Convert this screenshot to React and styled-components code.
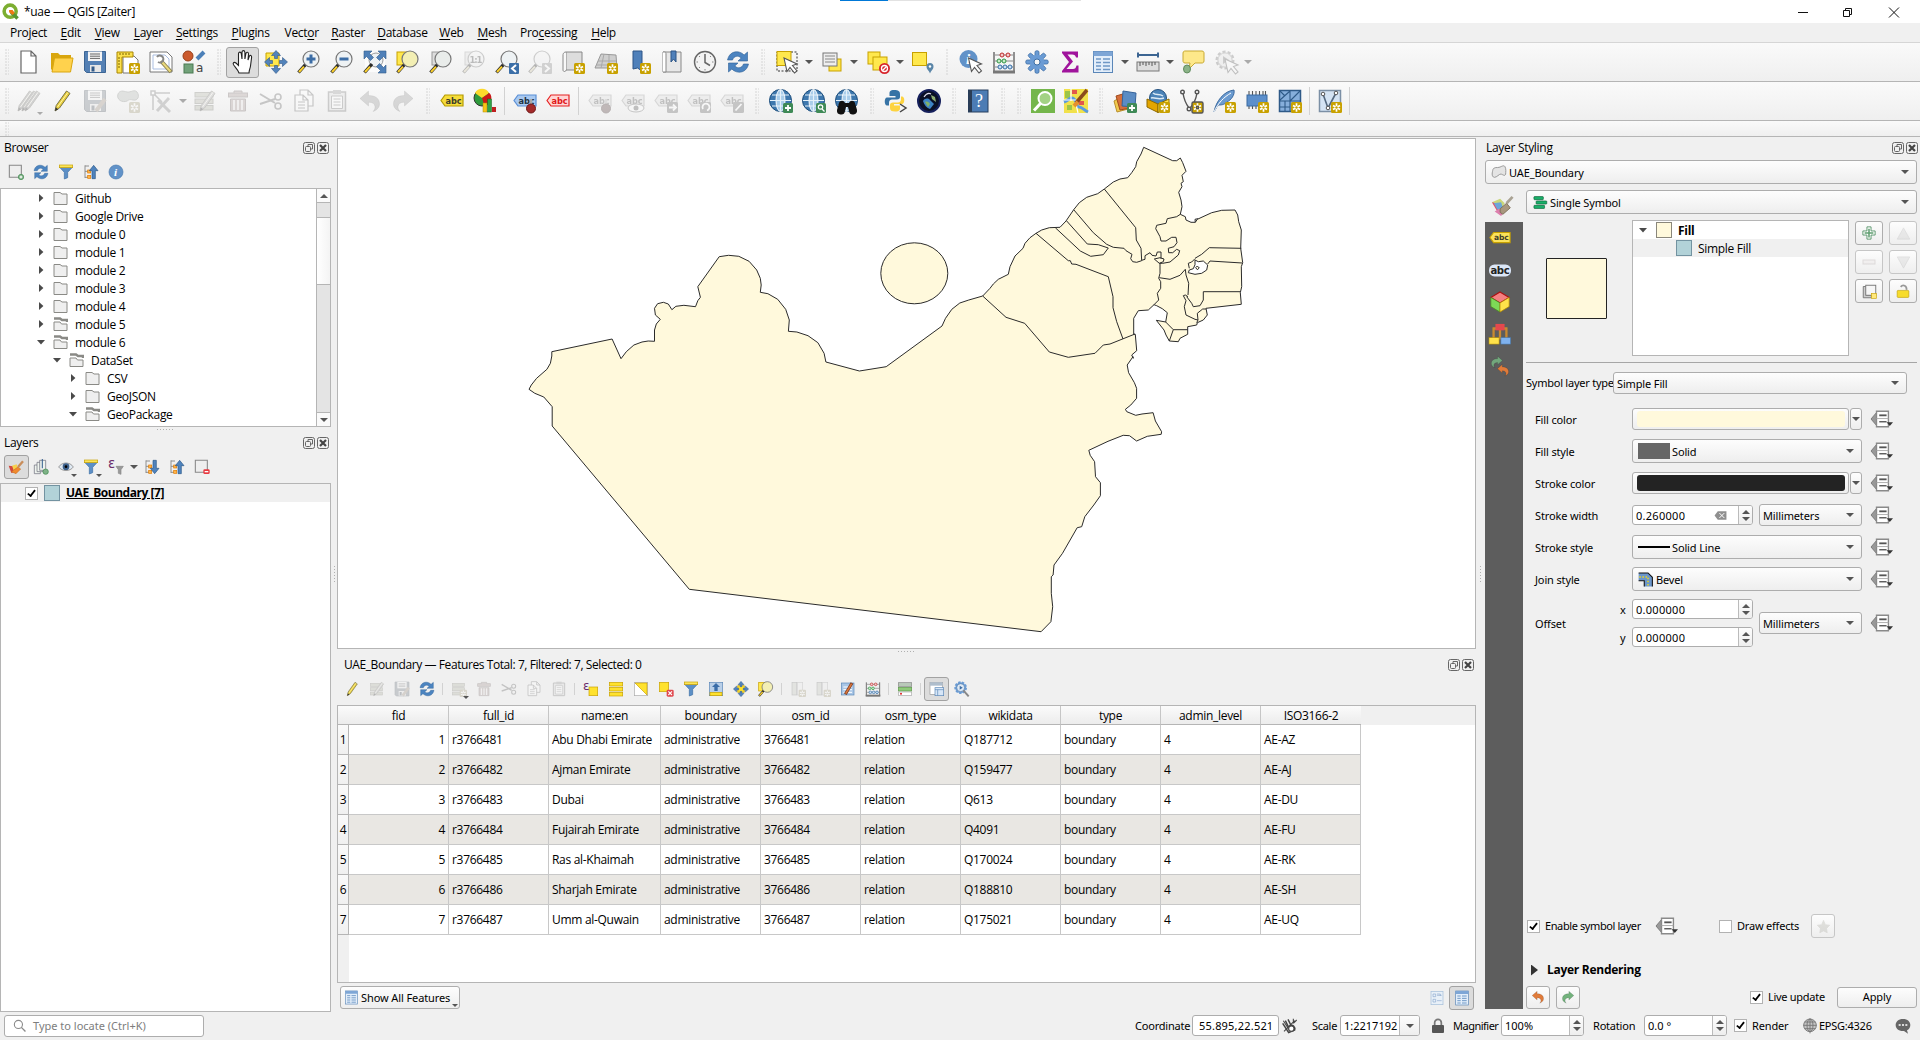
import React from "react";
import styled, { createGlobalStyle, css } from "styled-components";

const UI = '"Open Sans", "Noto Sans", sans-serif';
const FORM = '"Noto Sans", "Open Sans", sans-serif';
const LINE = "#b5b5b5";

const Global = createGlobalStyle`
  *, *::before, *::after { box-sizing: border-box; }
  html, body { margin: 0; padding: 0; background: #f0f0f0; }
  body { overflow: hidden; }
`;

/* ------------------------------------------------------------ icons */

const Star = ({ c = "#c8a100" }) => (
  <g>
    <rect x="13" y="13" width="11" height="11" rx="1.5" fill={c} />
    <path d="M18.5 14.3v8.400M15 16.400l7 4.200M22 16.400l-7 4.200" stroke="#fff" strokeWidth="1.7" />
    <circle cx="18.5" cy="18.5" r="1.2" fill={c} />
  </g>
);
const Plus = () => (
  <g>
    <rect x="14" y="14" width="10" height="10" rx="1.5" fill="#3f8a57" />
    <path d="M19 16v6M16 19h6" stroke="#fff" strokeWidth="1.8" />
  </g>
);
const GrayBadge = ({ d }) => (
  <g>
    <rect x="13" y="13" width="11" height="11" rx="1.5" fill="#666" />
    <path d={d} stroke="#fff" strokeWidth="1.8" fill="none" />
  </g>
);
const Lens = ({ fill = "#eef2f4" }) => (
  <g>
    <path d="M9 14L1.5 22.5" stroke="#2a2a2a" strokeWidth="3.4" />
    <path d="M7 16.6L2 22" stroke="#fbd02d" strokeWidth="2" />
    <circle cx="14" cy="9" r="8" fill={fill} stroke="#777" strokeWidth="1.2" />
  </g>
);
const Tag = ({ fill, stroke, color = "#3d3d2a" }) => (
  <g>
    <path d="M1 11.500L5 6h18v11H5z" fill={fill} stroke={stroke} strokeWidth="1.2" />
    <text x="5.5" y="14.6" fontFamily="DejaVu Sans" fontWeight="bold" fontSize="8.2" fill={color} textLength="16">abc</text>
  </g>
);
const Globe = () => (
  <g>
    <circle cx="11.5" cy="11.5" r="11" fill="#3e78ae" stroke="#1d4e7c" />
    <ellipse cx="11.5" cy="11.5" rx="4.5" ry="11" fill="#a9cdea" stroke="#fff" strokeWidth="1" />
    <path d="M1 11.5h21M3 6h17M3 17h17M11.5 1v21" stroke="#e5f1fa" strokeWidth="1.1" />
  </g>
);
const Pencil = ({ x = 0, c = "#e8cd3a" }) => (
  <g transform={`translate(${x} 0)`}>
    <path d="M5 22l1.2-5.5L16.5 2l3.5 2.4L9.5 19z" fill={c} stroke="#77734b" />
    <path d="M7.500 18L18 3.300" stroke="#fff6ae" strokeWidth="1" />
    <path d="M5 22l.8-3.4 2.4 1.6z" fill="#333" />
  </g>
);
const Rows = () => (
  <g fill="#b7bb72" stroke="#80845a">
    <rect x="2" y="3.5" width="18" height="4.5" />
    <rect x="2" y="10" width="18" height="4.5" />
    <rect x="2" y="16.5" width="18" height="4.5" />
  </g>
);
const Sheet = ({ x = 4, y = 1, w = 15, h = 20 }) => (
  <path d={`M${x} ${y}h${w - 5}l5 5v${h - 5}H${x}z M${x + w - 5} ${y}v5h5`} fill="#fff" stroke="#666" strokeWidth="1.2" />
);
const Refresh = () => (
  <g fill="#4c84c0" stroke="#2d5f95" strokeWidth=".6">
    <path d="M1.5 10C3 3 8.5 .8 13.5 2.2c2 .6 3.4 1.5 4.6 2.8L21.5 2v9h-9.5l3.2-3c-3-3-7.5-2-8.7 2z" />
    <path d="M22.5 14C21 21 15.5 23.2 10.5 21.8c-2-.6-3.4-1.5-4.6-2.8L2.5 22v-9H12l-3.2 3c3 3 7.5 2 8.7-2z" />
  </g>
);
const Tree = () => (
  <g>
    <path d="M3 2v19M3 3h6M3 11h6M3 20h6" stroke="#888" strokeWidth="1.4" fill="none" />
    <rect x="7" y="9" width="4.5" height="4.5" fill="#ffb347" stroke="#e07b00" />
    <rect x="7" y="17" width="4.5" height="4.5" fill="#ffb347" stroke="#e07b00" />
  </g>
);
const Disk = () => (
  <g>
    <path d="M1.5 1.5h21v21h-19l-2-2z" fill="#5480b4" stroke="#3c6594" />
    <rect x="5" y="1.5" width="14" height="9.5" fill="#f4f4f4" />
    <path d="M7 4h10M7 6.200h10M7 8.400h10" stroke="#666" />
    <rect x="7" y="15" width="11" height="7" fill="#e6e6e6" />
    <rect x="8.5" y="16.5" width="3" height="5" fill="#345b88" />
  </g>
);
const Form = () => (
  <g>
    <rect x="2.5" y="1.5" width="19" height="21" fill="#e3eefa" stroke="#5a86b8" />
    <rect x="2.5" y="1.5" width="19" height="4.500" fill="#7ea6d6" />
    <path d="M5 9h5M5 12.500h5M5 16h5M5 19.500h5M12 9h7M12 12.500h7M12 16h7M12 19.500h7" stroke="#6f98c6" strokeWidth="1.500" />
  </g>
);
const Cursor = ({ x = 0, y = 0 }) => (
  <path transform={`translate(${x} ${y})`} d="M9 8l3 13.500 3-4 4.500 5.500 2.500-2-4.500-5.500 4.500-1.500z" fill="#fff" stroke="#555" strokeWidth="1.1" />
);
const Abacus = () => (
  <g>
    <path d="M2 2v20M22 2v20" stroke="#666" strokeWidth="1.4" />
    <path d="M1 22h22" stroke="#777" strokeWidth="3" />
    <path d="M3 5h18M3 11h18M3 17h18" stroke="#888" />
    <g fill="#f6caca" stroke="#bd2a2a"><circle cx="10" cy="5" r="2" /><circle cx="16" cy="5" r="2" /></g>
    <g fill="#c6ecc6" stroke="#2e9444"><circle cx="7" cy="11" r="2" /><circle cx="12" cy="11" r="2" /></g>
    <g fill="#cadff4" stroke="#356ea6"><circle cx="8" cy="17" r="2" /><circle cx="13" cy="17" r="2" /><circle cx="18" cy="17" r="2" /></g>
  </g>
);
const Funnel = () => (
  <g>
    <path d="M2 4.500l7.500 8v10l5-2v-8L22 4.500z" fill="#5c8fc6" stroke="#3b6ea5" />
    <rect x="2" y="1.5" width="20" height="4" fill="#fbe45a" stroke="#c8a100" />
  </g>
);
const UpArrow = () => (
  <path d="M16 2l6.500 8h-4v12h-5V10h-4z" fill="#4f83bd" stroke="#2b5788" />
);
const FourWay = () => (
  <g fill="#5283bb" stroke="#31598a" strokeWidth=".6">
    <path d="M12 .5l4.500 5h-3v3h-3v-3h-3zM12 23.500l4.500-5h-3v-3h-3v3h-3zM.5 12l5-4.500v3h3v3h-3v3zM23.500 12l-5-4.500v3h-3v3h3v3z" />
  </g>
);
const Undo = ({ c = "#999", flip }) => (
  <path transform={flip ? "translate(24 0) scale(-1 1)" : undefined} d="M2 9.500L10.500 2v4.500c7 0 11 3 11 8.500 0 3.500-2.500 6-6.500 7.500 1.500-1.500 2.200-3 2-5-.3-2.800-2.500-4.300-6.500-4.300V17z" fill={c} stroke="#00000044" strokeWidth=".8" />
);
const Trash = () => (
  <g fill="#d98b82" stroke="#99625c">
    <rect x="2.5" y="4" width="19" height="4" />
    <path d="M8 4V2h8v2M4.500 10h15v12h-15z" />
    <path d="M8 11v10M12 11v10M16 11v10" stroke="#fff" strokeWidth="1.5" />
  </g>
);
const Copy = () => (<g><Sheet x={8} y={1} w={13} h={16} /><Sheet x={3} y={6} w={13} h={16} /><path d="M6 13h7M6 16h7M6 19h7" stroke="#666" /></g>);
const Paste = () => (<g><path d="M3.500 3h17v19h-17z" fill="#ddd" stroke="#777" strokeWidth="1.5" /><rect x="8" y="1" width="8" height="4" fill="#999" /><path d="M6.500 7h11v12.500h-11z" fill="#fff" stroke="#777" /><path d="M8.500 10h7M8.500 13h7M8.500 16h7" stroke="#777" /></g>);
const Scissors = () => (<g fill="none" stroke="#666" strokeWidth="1.6"><path d="M1 5l15 9M1 15l15-5" strokeWidth="2" /><circle cx="19" cy="8" r="3" /><circle cx="19" cy="17" r="3" /></g>);
const Bulb = () => (<g><path d="M18 10v7" stroke="#aaa" strokeWidth="2.5" /><circle cx="18" cy="19.5" r="4.500" fill="#a32a2a" stroke="#701818" /></g>);
const Blob = () => (<path d="M2 5c2-4 5-3 9-2 4 .6 7-3 10 0 3 4 1 9-4 8-4-1-4 0-6 1-4 2-11-1-9-7z" fill="#a7bda4" stroke="#7d8f7b" />);
const Palette = () => (
  <g>
    <path d="M1 8l9-4 5 5-5 9z" fill="#c9d67a" />
    <path d="M1 8l8 2-1 10z" fill="#e0506b" />
    <path d="M3 9l8-1 2 6-6 2z" fill="#6ba6d8" />
    <path d="M4 18l5-3 5 4-3 4z" fill="#dd7fae" />
    <path d="M10 15l7-6 4 5-8 7-3-2z" fill="#a8977e" stroke="#7b6c56" />
    <path d="M17 9L23.500 2" stroke="#a9a293" strokeWidth="3" />
  </g>
);
const Expand = () => (<g><path d="M2 2h20v20H2z" fill="#fff" fillOpacity=".7" /><circle cx="13" cy="10" r="7" fill="#eef2f4" stroke="#999" /><path d="M1 1h8L6.500 3.500l4 4-3 3-4-4L1 9zM23 1v8l-2.500-2.500-4 4-3-3 4-4L15 1zM23 23h-8l2.500-2.500-4-4 3-3 4 4L23 15z" fill="#4f80b8" stroke="#2f5b8c" strokeWidth=".6" /><path d="M9 14L1.500 22.500" stroke="#2a2a2a" strokeWidth="3.4" /><path d="M7 16.600L2 22" stroke="#fbd02d" strokeWidth="2" /></g>);
const Info = () => (<g><circle cx="12" cy="12" r="10.5" fill="#6192c8" stroke="#4577ad" /><text x="9" y="18" fontFamily="Liberation Serif" fontStyle="italic" fontWeight="bold" fontSize="17" fill="#fff">i</text></g>);
const gearTeeth = Array.from({ length: 8 }, (_, i) => i * 45);
const Gear = () => (<g>{gearTeeth.map((a) => <rect key={a} x="10" y="0.8" width="4" height="6" rx="1.5" fill="#6a9bd4" stroke="#3d6ea5" strokeWidth=".8" transform={`rotate(${a} 12 12)`} />)}<circle cx="12" cy="12" r="7.300" fill="#6a9bd4" /><circle cx="12" cy="12" r="3" fill="#f6f6f6" stroke="#3d6ea5" /></g>);

const ICONS = {
  newFile: <Sheet x={4} y={1} w={15} h={22} />,
  open: <g><path d="M1 3h7l2 2h11v4H5L3 21 1 19z" fill="#d9a60f" /><path d="M4.500 8H23l-2.500 14H2z" fill="#ffd24d" stroke="#d9a60f" /></g>,
  save: <Disk />,
  layout: <g><path d="M7 6h11l4 4v13H7z" fill="#fff" stroke="#777" /><path d="M1 2h16v5H6v16H1z" fill="#fbe04c" stroke="#a98600" /><path d="M4 3v2M7 3v2M10 3v2M13 3v2M2 8h2M2 11h2M2 14h2M2 17h2" stroke="#7d6500" /><Star /></g>,
  layoutManager: <g><path d="M1 2h17l5 5v15H1z" fill="#fff" stroke="#777" /><path d="M4 5h12l4 4v10H4z" fill="none" stroke="#a9bde0" /><path d="M12 11l10 11" stroke="#8a8252" strokeWidth="4" /><path d="M13 12l8.500 9.500" stroke="#ead97c" strokeWidth="2" /><path d="M8 7a3.500 3.500 0 1 1 1 5" fill="none" stroke="#888" strokeWidth="2" /></g>,
  styleManager: <g><circle cx="6" cy="6" r="5" fill="#cb5a2d" stroke="#983e18" /><path d="M15 9l7-7" stroke="#4c80b8" strokeWidth="4" /><rect x="2" y="14" width="9" height="9" fill="#72a27a" stroke="#4a7a52" /><text x="14" y="22" fontFamily="DejaVu Sans" fontSize="12" fill="#444">a</text></g>,
  pan: <path d="M8 23c-1-3-3-5-5-7.500C1 13 3 11.500 5 13l2.500 2.500V4c0-2.500 2.500-2.500 2.800 0L11 9V2.500c0-2.500 2.700-2.500 2.900 0V9l1-5.500c.5-2 2.700-1.500 2.600.5L17 10l1.200-3.500c.8-2 2.700-1 2.400 1L19.500 16c-.5 3-1.500 4.500-1.500 7z" fill="#fff" stroke="#222" strokeWidth="1.1" />,
  panSel: <g><path d="M2 3h13v13H2z" fill="#ffe84d" stroke="#c8a100" /><FourWay /></g>,
  zoomIn: <g><Lens /><path d="M14 4.500v9M9.500 9h9" stroke="#3c6da5" strokeWidth="3" /></g>,
  zoomOut: <g><Lens /><path d="M9.500 9h9" stroke="#3c6da5" strokeWidth="3" /></g>,
  zoomFull: <Expand />,
  zoomSel: <g><rect x="1" y="2" width="10" height="13" fill="#ffe84d" stroke="#c8a100" /><Lens fill="#f3efb4" /></g>,
  zoomLayer: <g><rect x="3" y="2" width="8" height="13" fill="#ddd" stroke="#999" /><Lens fill="#e9ecea" /></g>,
  zoomNative: <g><rect x="3" y="2" width="8" height="13" fill="#ddd" stroke="#999" /><Lens /><text x="7.5" y="12.5" fontFamily="DejaVu Sans" fontWeight="bold" fontSize="8.5" fill="#444" textLength="13">1:1</text></g>,
  zoomLast: <g><Lens /><rect x="14" y="13" width="10" height="11" rx="1" fill="#3c6fa8" /><path d="M21 15l-4 3.500 4 3.500" stroke="#fff" strokeWidth="2" fill="none" /></g>,
  zoomNext: <g><Lens /><rect x="14" y="13" width="10" height="11" rx="1" fill="#8a8a8a" /><path d="M17 15l4 3.500-4 3.500" stroke="#fff" strokeWidth="2" fill="none" /></g>,
  newMap: <g><path d="M5 2h16v18H5z" fill="#ddd" stroke="#888" /><path d="M5 2c-3 0-3 3-3 3v15c0 2 3 2 3 0" fill="#f8f8f8" stroke="#888" /><Star /></g>,
  new3d: <g><path d="M7 4l15 1 1 13-22 0z" fill="#cfcfcf" stroke="#999" /><path d="M4 11h18M2 15h20M10 4l-3 14M15 5v13" stroke="#a9a9a9" fill="none" /><Star /></g>,
  bookmark: <g><path d="M6 1h9v20l-4.500-3L6 19z" fill="#4f80ba" stroke="#2c5587" /><Star /></g>,
  bookmarks: <g><path d="M3 2h18v20H3z" fill="#e8e8e8" stroke="#888" /><path d="M3 2c3 0 3 0 3 3v17H3" fill="#fff" stroke="#888" /><path d="M11 1h5v11l-2.500-3L11 12z" fill="#4f80ba" stroke="#2c5587" /></g>,
  clock: <g><circle cx="12" cy="12" r="10.5" fill="#f3f3f3" stroke="#666" strokeWidth="1.4" /><path d="M12 4v8.500l5 3" fill="none" stroke="#666" strokeWidth="1.5" /><path d="M3.500 12h1.500M19 12h1.500M12 19v1.500M6 6l1 1M18 6l-1 1M6 18l1-1" stroke="#888" /></g>,
  refresh: <Refresh />,
  select: <g><rect x="2" y="2" width="20" height="19" fill="none" stroke="#333" strokeDasharray="2 1.500" /><rect x="2" y="1.5" width="14" height="14" fill="#ffe84d" stroke="#c8a100" /><Cursor /></g>,
  selectVal: <g><rect x="9" y="9" width="12" height="12" fill="#ffe84d" stroke="#c8a100" /><rect x="3" y="3" width="14" height="13" fill="#eee" stroke="#777" /><path d="M5 6h10M5 9h10M5 12h10" stroke="#888" /></g>,
  deselect: <g><rect x="2" y="2" width="12" height="12" fill="#ffe84d" stroke="#c8a100" /><rect x="7" y="7" width="14" height="13" fill="#ffe84d" stroke="#c8a100" /><circle cx="18.5" cy="18.5" r="5.500" fill="#d7252d" /><circle cx="18.5" cy="18.5" r="3" fill="none" stroke="#fff" strokeWidth="1.3" /><path d="M16.500 20.500l4-4" stroke="#fff" strokeWidth="1.3" /></g>,
  selectLoc: <g><rect x="1.5" y="2.5" width="14" height="13" fill="#ffe84d" stroke="#c8a100" /><path d="M19 23.500c-1-3-3.500-4-3.500-7a3.500 3.500 0 0 1 7 0c0 3-2.500 4-3.500 7z" fill="#5b86a8" /><circle cx="19" cy="16.5" r="1.2" fill="#fff" /></g>,
  identify: <g><circle cx="9.500" cy="9" r="9" fill="#6192c8" /><text x="7" y="14" fontFamily="Liberation Serif" fontStyle="italic" fontWeight="bold" fontSize="15" fill="#fff">i</text><Cursor x={0.500} /></g>,
  abacus: <Abacus />,
  gear: <Gear />,
  sigma: <path d="M4 1.500h16v6h-2c-.5-2-1.500-3-4-3h-4.500l5.500 7-6.500 7.500h6.500c2 0 3-1 3.500-3.500h2v7H4v-1.500l7-9-7-9z" fill="#a0149c" />,
  table: <Form />,
  measure: <g><path d="M2 5h20M2 2.500v5M22 2.500v5" stroke="#3c6592" strokeWidth="2" /><rect x="1" y="12" width="22" height="9" fill="#ddd" stroke="#777" /><path d="M4 12v4M7 12v3M10 12v4M13 12v3M16 12v4M19 12v3" stroke="#555" /></g>,
  tip: <g><path d="M4 1h17c2 0 2 2 2 2v8c0 2-2 2-2 2h-7l-6 6 1-6H4c-2 0-2-2-2-2V3c0-2 2-2 2-2z" fill="#fde88a" stroke="#c8a932" /><ellipse cx="6" cy="19" rx="3.500" ry="4" fill="#8bb387" stroke="#5f8a5d" /></g>,
  action: <g><circle cx="11" cy="10" r="8" fill="#ccc" stroke="#777" strokeWidth="3" strokeDasharray="3 2" /><circle cx="11" cy="10" r="7" fill="#e4e4e4" stroke="#999" /><path d="M9 6l6 4-6 4z" fill="#777" /><Cursor x={2} y={1} /></g>,
  pencils: <g><Pencil x={-4} c="#888" /><Pencil x={0} c="#888" /><Pencil x={3} c="#888" /></g>,
  pencil: <Pencil />,
  saveEdit: <g><Disk /><path d="M13 22l9-12" stroke="#cc8a3f" strokeWidth="4" /></g>,
  addPoly: <g><Blob /><Star /></g>,
  vertex: <g fill="none" stroke="#777" strokeWidth="1.5"><path d="M4 21V4h17M4 4l9 9" /><rect x="2" y="2" width="4" height="4" fill="#fff" /><path d="M8 22L20 9M9 11l12 12" stroke="#888" strokeWidth="3" /></g>,
  multi: <g><Rows /><Pencil x={2} c="#aaa" /></g>,
  trash: <Trash />, cut: <Scissors />, copy: <Copy />, paste: <Paste />,
  undo: <Undo />, redo: <Undo flip />,
  tagY: <Tag fill="#f6dc3a" stroke="#b39a00" />,
  chart: <g><circle cx="9" cy="9" r="8" fill="#2f9a3c" stroke="#333" /><path d="M9 9L2 4a8 8 0 0 1 14 0z" fill="#fdd92c" /><path d="M9 9l7.500-5a8 8 0 0 1-5 13z" fill="#cc1717" /><rect x="10" y="14" width="4" height="9" fill="#f5c518" stroke="#b38b00" strokeWidth=".5" /><rect x="14.5" y="10" width="4" height="13" fill="#2fa346" stroke="#14601f" strokeWidth=".5" /><rect x="19" y="18" width="4" height="5" fill="#c02020" /></g>,
  tagB: <g><Tag fill="#a9c9f0" stroke="#5a8fd6" color="#234" /><Bulb /></g>,
  tagR: <Tag fill="#ffd5d5" stroke="#e62222" color="#e01818" />,
  tagPin: <g><Tag fill="#ddd" stroke="#999" color="#555" /><Bulb /></g>,
  tagEye: <g><Tag fill="#ddd" stroke="#999" color="#555" /><ellipse cx="15" cy="19" rx="8" ry="4" fill="#fff" stroke="#666" /><circle cx="15" cy="19" r="2.5" fill="#555" /></g>,
  tagMove: <g><Tag fill="#ddd" stroke="#999" color="#555" /><GrayBadge d="M15 18.500h7M19 15.500l3 3-3 3" /></g>,
  tagRot: <g><Tag fill="#ddd" stroke="#999" color="#555" /><GrayBadge d="M16 20a3.500 3.500 0 1 1 4 1.500" /></g>,
  tagEdit: <g><Tag fill="#ddd" stroke="#999" color="#555" /><GrayBadge d="M15.500 21.500l6-6.500" /></g>,
  globeAdd: <g><Globe /><Plus /></g>,
  globeFind: <g><Globe /><rect x="14" y="14" width="10" height="10" rx="1.5" fill="#3f8a57" /><circle cx="18.5" cy="18" r="2.200" fill="none" stroke="#fff" strokeWidth="1.2" /><path d="M20 20l2.500 2.500" stroke="#fff" strokeWidth="1.2" /></g>,
  globeBino: <g><Globe /><path d="M4 14c1-3 5-3 6 0h4c1-3 5-3 6 0l2 7a4 4 0 0 1-8 1l-1-4h-2l-1 4a4 4 0 0 1-8-1z" fill="#111" /></g>,
  python: <g><path d="M10.500 1c-5 0-5 2-5 4v2h6v1.500H3c-3 0-3 8 0 8h2v-3c0-2 1.500-3 3-3H13c2 0 3-1 3-2.500V5c0-3-2-4-5.500-4z" fill="#3773a5" /><path d="M11 22.500c5 0 5-2 5-4v-2h-6V15h8c3 0 3-7.500 0-7.500h-1v3c0 2-1.500 3-3 3H9c-2 0-3 1-3 2.500v3c0 2.500 1.500 3.500 5 3.500z" fill="#fdd33f" /><path d="M16 15l6 4-6 4" stroke="#444" fill="none" strokeWidth="1.5" /></g>,
  earth: <g><circle cx="12" cy="12" r="11" fill="#0a1026" stroke="#16205c" strokeWidth="2" /><path d="M6 12c2-3 5-3 7-1l4 4-4 5c-3-1-6-4-7-8z" fill="#3e83c4" /><path d="M8 13c2-1 4 0 5 2l-2 3z" fill="#7fb069" /><path d="M14 6l4 2 1 5-4-3z" fill="#8fae74" /><path d="M7 8c2-3 5-4 7-3" stroke="#dde" fill="none" strokeWidth="1.2" /></g>,
  help: <g><rect x="2.500" y="1" width="19.500" height="22" fill="#4c7cb4" stroke="#263f5f" /><rect x="2.500" y="1" width="3.500" height="22" fill="#2b3d55" /><text x="9" y="18" fontFamily="Liberation Serif" fontSize="18" fill="#fff">?</text></g>,
  greenLens: <g><rect width="24" height="24" fill="#74b64b" /><circle cx="14" cy="9.5" r="6.500" fill="#a3d284" stroke="#fff" strokeWidth="2" /><path d="M9.500 14.500L3 21.500" stroke="#fff" strokeWidth="3" /></g>,
  osm: <g><rect width="24" height="24" fill="#f1e14b" /><path d="M8 1h5v4H8zM15 12h5v4h-5z" fill="#e2574c" /><path d="M1 2h5v7H1zM3 16h5v5H3z" fill="#9cc44a" /><path d="M0 13c6-2 6-6 10-3s2 8 5 8 5 3 9 5" stroke="#5a9be0" strokeWidth="3" fill="none" /><path d="M7 0v12M0 11h12M14 24l-2-9" stroke="#fff" strokeWidth="1.200" fill="none" /><path d="M12 14L23 1" stroke="#8b4a1b" strokeWidth="3.500" /><path d="M10 17l4-4" stroke="#e6912e" strokeWidth="4" /></g>,
  dataSource: <g><path d="M1 12l9-5 5 13-11 3z" fill="#f0c94d" stroke="#b8902c" /><path d="M3 7l10-3 4 15-10 2z" fill="#d66f3a" stroke="#a14a1c" /><path d="M10 2l13 2-1 14-13-1z" fill="#5b8cc4" stroke="#36639a" /><Plus /></g>,
  geopackage: <g><circle cx="12" cy="9" r="8.500" fill="#4b83b8" stroke="#265280" /><path d="M7 4c3 3 6 0 10 3M5 9c4-1 7 2 13 0" stroke="#dceaf5" fill="none" strokeWidth="1.5" /><path d="M1 10l11 5v8.500L1 18z" fill="#e3a500" stroke="#8d6900" /><path d="M12 15l11-5v8l-11 5.500z" fill="#ffe24a" stroke="#8d6900" /><Star /></g>,
  shapefile: <g fill="none" stroke="#555" strokeWidth="1.4"><path d="M4 4c1 7 3 11 6 15M18 4c-1 6-3 11-7 15" /><circle cx="3.500" cy="3" r="1.800" fill="#fff" /><circle cx="10" cy="20" r="1.800" fill="#fff" /><circle cx="18" cy="3" r="1.800" fill="#fff" /><Star /></g>,
  feather: <g><path d="M2 23C4 12 12 2 22 1c1 5-3 10-7 12-3 3-6 3-9 3z" fill="#6b9bd0" stroke="#3c6a9f" /><path d="M2 23C6 14 12 8 19 4" stroke="#fff" fill="none" /><Star /></g>,
  memory: <g><path d="M4 2v18M7.500 2v18M11 2v18M14.500 2v18M18 2v16M20.500 2v16" stroke="#555" strokeWidth="1.1" /><rect x="2" y="6" width="20" height="11" fill="#5c8fcb" stroke="#3a6aa0" /><Star /></g>,
  mesh: <g><rect x="1.5" y="1.5" width="21" height="21" fill="#86aedb" stroke="#2f5a88" strokeWidth="1.5" /><path d="M12 1.500v21M1.500 12h21M2 11l10-9M2 2l5 5M22 2L12 12M12 18H2M7 12v10" stroke="#2f5a88" fill="none" strokeWidth="1.1" /><Star /></g>,
  virtual: <g><rect x="1.5" y="1.5" width="21" height="21" fill="#d4e3f3" stroke="#7b8fa5" strokeWidth="1.5" /><path d="M5 5l5 14L18 4" fill="none" stroke="#55697f" strokeWidth="1.6" /><circle cx="5" cy="5" r="1.800" fill="#fff" stroke="#555" /><circle cx="10" cy="19" r="1.800" fill="#fff" stroke="#555" /><circle cx="18" cy="4" r="1.800" fill="#fff" stroke="#555" /><Star /></g>,
  addLayer: <g><path d="M2 2h18v18H2z" fill="#eee" stroke="#888" strokeWidth="1.6" /><circle cx="19.5" cy="19.5" r="4" fill="#7fb287" stroke="#3f8a4f" /><path d="M19.500 17.500v4M17.500 19.500h4" stroke="#fff" strokeWidth="1.5" /></g>,
  removeLayer: <g><path d="M2 2h18v18H2z" fill="#eee" stroke="#888" strokeWidth="1.6" /><rect x="14" y="15.5" width="9.5" height="7" rx="2" fill="#e8383f" /><path d="M16 19h5.500" stroke="#fff" strokeWidth="2" /></g>,
  funnel: <Funnel />,
  collapse: <g><Tree /><UpArrow /></g>,
  expandAll: <g><Tree /><g transform="translate(0 24) scale(1 -1)"><UpArrow /></g></g>,
  info: <Info />,
  stylePanel: <g><path d="M1 10l7 1 1 9-4 1z" fill="#d3483f" /><path d="M6 10l7-2 2 7-6 3z" fill="#f7d04a" /><path d="M5 19l10-7 4 3-7 7z" fill="#f08a2e" stroke="#c0671c" strokeWidth=".8" /><path d="M15 12L22.500 3.500" stroke="#c98d5a" strokeWidth="3.500" /></g>,
  addGroup: <g fill="#eef3ee" stroke="#667"><path d="M2 9h9v13H2z" /><path d="M6 5h9v14H6z" /><path d="M10 2h9v15h-9z" /><path d="M14 0v14" stroke="#3c6592" strokeWidth="1.600" /><circle cx="19" cy="19" r="4" fill="#7fb287" stroke="#3f8a4f" /></g>,
  eye: <g><path d="M1 12c5-8 17-8 22 0-5 7-17 7-22 0z" fill="#dfe9f3" stroke="#999" strokeWidth="1.5" /><circle cx="12" cy="11.5" r="5" fill="#3b5f8a" /><circle cx="12" cy="11.5" r="2" fill="#000" /></g>,
  epsilon: <g><text x="0" y="14" fontFamily="DejaVu Sans" fontSize="20" fill="#6b2d6b">ε</text><path d="M12 11h11l-3.500 5v7l-4-1.500V16z" fill="#999" stroke="#888" /></g>,
  tableTag: <g><Rows /><Star /></g>,
  selExpr: <g><rect x="9" y="9" width="13" height="13" fill="#ffe22e" stroke="#c8a100" /><text x="0" y="14" fontFamily="DejaVu Sans" fontSize="18" fill="#6b2d6b">ε</text></g>,
  selAll: <g fill="#ffe22e" stroke="#c8a100"><rect x="2" y="2" width="20" height="5.5" /><rect x="2" y="9.5" width="20" height="5.5" /><rect x="2" y="17" width="20" height="5.5" /></g>,
  invert: <g><rect x="2" y="2" width="20" height="20" fill="#fff" stroke="#aaa" /><path d="M3 3l18 18V3z" fill="#ffe22e" stroke="#c8a100" /></g>,
  deselAll: <g><rect x="2" y="2" width="14" height="14" fill="#ffe22e" stroke="#c8a100" /><rect x="13" y="13" width="10.5" height="10.5" rx="2" fill="#e0484e" /><path d="M15.500 15.500l5.500 5.500M21 15.500l-5.500 5.500" stroke="#fff" strokeWidth="1.6" /></g>,
  moveTop: <g><rect x="2" y="2" width="20" height="20" fill="#b9cfe8" stroke="#5a86b8" /><rect x="3" y="17" width="18" height="5" fill="#ffe22e" stroke="#c8a100" /><path d="M12 3l6 6h-3.500v6h-5V9H6z" fill="#3a6da8" /></g>,
  panRows: <g><path d="M7 7h10v10H7z" fill="#ffe22e" stroke="#c8a100" /><FourWay /></g>,
  newField: <g><rect x="3" y="2" width="7" height="19" fill="#b8d19c" stroke="#777" /><rect x="11" y="2" width="8" height="19" fill="#eee" stroke="#999" /><Star /></g>,
  editField: <g><rect x="2" y="3" width="19" height="18" fill="#a9c6e6" stroke="#5a86b8" /><path d="M5 9h13M5 13h13M5 17h13" stroke="#fff" strokeWidth="1.500" /><path d="M8 20L18 3" stroke="#7a3a20" strokeWidth="4.500" /><path d="M8.500 19L17.500 4" stroke="#d9763c" strokeWidth="2.500" /></g>,
  condFormat: <g><rect x="2" y="2.500" width="20" height="5.500" fill="#b9c9b9" stroke="#888" /><rect x="2" y="9.500" width="20" height="5.500" fill="#8fca7a" stroke="#5c9a4a" /><rect x="2" y="16.500" width="20" height="5" fill="#fff" stroke="#aaa" /><circle cx="6" cy="19" r="1.5" fill="#d22" /></g>,
  dock: <g><rect x="1.5" y="2" width="19" height="18" fill="#fff" stroke="#999" /><rect x="1.5" y="2" width="19" height="5" fill="#aebdcc" /><rect x="9" y="10" width="13" height="12" fill="#d7e6f7" stroke="#5a86b8" /><path d="M9 13h13M13 13v9" stroke="#5a86b8" /></g>,
  zoomCog: <g><circle cx="10" cy="10" r="8" fill="#6a9bd4" stroke="#6a9bd4" strokeWidth="3" strokeDasharray="3.500 2" /><circle cx="10" cy="10" r="6" fill="#dfe9f4" stroke="#4a78ab" /><path d="M8.500 7l4.500 3-4.500 3z" fill="#3c6da5" /><path d="M14 14l8 9" stroke="#888" strokeWidth="3" /></g>,
  formView: <g opacity=".85"><rect x="3" y="2" width="18" height="20" fill="#e7f0fa" stroke="#93b3d6" /><path d="M6 6h4v4H6zM6 14h4v4H6z" fill="none" stroke="#7c9fc8" /><path d="M12 8h7M12 16h7M12 6h5v3" stroke="#7c9fc8" fill="none" /></g>,
  palette: <Palette />,
  tagTab: <Tag fill="#fbe25a" stroke="#c8a100" />,
  maskTab: <g><rect x="0" y="6" width="24" height="13" rx="6" fill="#dbe6f7" /><text x="1.5" y="16.5" fontFamily="DejaVu Sans" fontWeight="bold" fontSize="11" fill="#222" textLength="21">abc</text></g>,
  cube: <g stroke="#444" strokeWidth=".8"><path d="M12 1l10 6-10 6L2 7z" fill="#f58080" stroke="#a11" strokeWidth="1.200" /><path d="M2 7l10 6v10L2 17z" fill="#7ed957" stroke="#4a8a20" /><path d="M22 7l-10 6v10l10-6z" fill="#ffe24a" stroke="#b38b00" /></g>,
  diagramTab: <g><path d="M12 6v12M5 5v12M19 5v12M4 6h16" stroke="#c98a30" strokeWidth="2.5" fill="none" /><rect x="7" y="1" width="10" height="7" fill="#e5484d" /><rect x="0" y="16" width="11" height="7" fill="#ffe24a" stroke="#b38b00" strokeWidth=".6" /><rect x="13" y="16" width="10.5" height="7" fill="#7fb2ef" stroke="#4577ad" strokeWidth=".6" /></g>,
  history: <g><g transform="translate(1 0) scale(.62)"><Undo c="#72a77c" flip /></g><g transform="translate(8 9) scale(.62)"><Undo c="#e07b3a" /></g></g>,
  undoO: <Undo c="#e07b3a" />, redoG: <Undo c="#72b27c" flip />,
  polygon: <path d="M3 8c2-4 6-2 9-3 4-1 7-4 9-1 2 4 1 8 1 11-1 4-4 1-7 0-3 0-6 5-10 5-5-1-3-8-2-12z" fill="#e4e4e4" stroke="#8d8d8d" strokeWidth="1.3" />,
  single: <g fill="#19b06a" stroke="#0a5b34"><rect x="1.5" y="2.5" width="15" height="5" rx="1" /><rect x="5" y="9.5" width="17" height="5" rx="1" /><rect x="1.5" y="16.5" width="17" height="5" rx="1" /></g>,
  plusG: <g><path d="M8.500 1.500h7v7h7v7h-7v7h-7v-7h-7v-7h7z" fill="#fff" stroke="#45895a" strokeWidth="1.400" /><path d="M12 4.500v15M4.500 12h15" stroke="#5f9e70" strokeWidth="2.600" /></g>,
  minusG: <rect x="3" y="9" width="18" height="6" fill="#f6dede" stroke="#c99" strokeWidth="1.5" />,
  upG: <path d="M12 3l10 18H2z" fill="#ccc" stroke="#999" />,
  downG: <path d="M12 21L2 3h20z" fill="#ccc" stroke="#999" />,
  dup: <g><path d="M2 4h5v14h8v4H2z" fill="#ccc" stroke="#777" strokeWidth="1.5" /><rect x="6" y="2" width="16" height="16" fill="#f6f6f6" stroke="#777" strokeWidth="1.5" /><rect x="15" y="15" width="8" height="8" fill="#ffe87c" stroke="#c8a100" /></g>,
  unlock: <g><path d="M8 5c4-5 11-2 10 5" fill="none" stroke="#999" strokeWidth="3" /><rect x="2" y="11" width="20" height="12" rx="1.5" fill="#f7dc2c" stroke="#b99800" /></g>,
  star: <path d="M12 2l3 7 7 1-5 5 1 7-6-3-6 3 1-7-5-5 7-1z" fill="#b5ae80" stroke="#aaa27a" />,
  override: <g><path d="M0 12L6 5v14z" fill="#999" stroke="#777" /><path d="M6 3.500h13v17H6z" fill="#fff" stroke="#8a8a8a" strokeWidth="1.5" /><path d="M9 8h8" stroke="#555" strokeWidth="2" /><path d="M6 11.500h13" stroke="#aaa" /><path d="M9 15h8" stroke="#555" strokeWidth="1.5" /><path d="M17 15.500h7l-3.500 4z" fill="#333" /></g>,
  clear: <g><path d="M1 12l6-8h16v16H7z" fill="#8f8f8f" /><path d="M10 7.500l9 9M19 7.500l-9 9" stroke="#fff" strokeWidth="1.8" /></g>,
  bevel: <g><path d="M1 1.500h15l7 7V23H10v-9H1z" fill="#6b96cb" /><path d="M1 1.500h15l7 7V23M1 14h9v9" fill="none" stroke="#111" strokeWidth="1.700" /><path d="M2 8h14v14" stroke="#f0d818" strokeWidth="2.4" strokeDasharray="2.500 2.500" fill="none" /></g>,
  search: <g fill="none" stroke="#8a8a8a" strokeWidth="2"><circle cx="10" cy="10" r="7.5" /><path d="M15.500 15.500L23 23" strokeWidth="2.5" /></g>,
  mouse: <g><path d="M5 4l5 10M9 2l5 10M1 8l9 14 9-4c1-5-3-9-7-6" fill="#ddd" stroke="#444" strokeWidth="2.2" /><path d="M2 4l9 14M17 1v6M22 3l-5 5M3 20l16-16" stroke="#444" strokeWidth="1.6" /><circle cx="14" cy="16" r="4" fill="#fff" stroke="#444" strokeWidth="1.6" /></g>,
  lock: <g><path d="M7 12V7a5 5 0 0 1 10 0v5" fill="none" stroke="#777" strokeWidth="2.6" /><rect x="3" y="10.5" width="18" height="12" rx="1.5" fill="#555" /></g>,
  crs: <g fill="none" stroke="#777" strokeWidth="1.4"><circle cx="12" cy="11" r="9.5" fill="#c4c4c4" /><ellipse cx="12" cy="11" rx="4.5" ry="9.5" /><path d="M2 11h20M4 6h16M4 16h16M12 1v22" /></g>,
  bubble: <g><path d="M12 1.500c7 0 11 4 11 9 0 4-2 6.500-5 8l1.500 5-6-4C5 20 1 15.500 1 10.500s4-9 11-9z" fill="#666" /><path d="M5.500 10.500h3M10.500 10.500h3M15.500 10.500h3" stroke="#fff" strokeWidth="2.6" /></g>,
};

const Glyph = styled.svg`
  display: block;
  flex: none;
  overflow: visible;
  width: ${(p) => p.$s}px;
  height: ${(p) => p.$s}px;
  letter-spacing: 0;
  ${(p) => p.$off && css`filter: grayscale(0.8); opacity: 0.32;`}
`;
const Icon = ({ name, size = 24, off }) => (
  <Glyph viewBox="0 0 24 24" $s={size} $off={off} fill="none">{ICONS[name]}</Glyph>
);

/* ------------------------------------------------------------ shell */

const Window = styled.div`
  width: 1920px;
  height: 1040px;
  display: flex;
  flex-direction: column;
  background: #f0f0f0;
  color: #000;
  font: 12px/16px ${UI};
  font-variant-ligatures: none;
  letter-spacing: -0.3px;
  white-space: nowrap;
`;
const TitleBar = styled.header`
  height: 23px;
  flex: none;
  background: #fff;
  display: flex;
  align-items: center;
  position: relative;
  padding: 0 2px 0 2px;
  gap: 5px;
`;
const LoadStrip = styled.div`
  position: absolute;
  top: 0;
  left: 840px;
  width: 241px;
  height: 1px;
  background: linear-gradient(to right, #0078d7 48px, #e2e2e2 48px);
`;
const Caption = styled.span`flex: 1;`;
const WindowButtons = styled.div`
  display: flex;
  width: 137px;
  svg { width: 46px; height: 20px; display: block; flex: none; }
`;
const MenuBar = styled.nav`
  height: 20px;
  flex: none;
  display: flex;
  padding-left: 10px;
  gap: 13.6px;
  line-height: 19px;
  border-bottom: 1px solid #d6d6d6;
`;
const MenuItem = styled.span`
  width: ${(p) => p.$w}px;
  u { text-underline-offset: 2px; }
`;
const ToolBar = styled.div`
  height: ${(p) => p.$h || 39}px;
  flex: none;
  display: flex;
  align-items: center;
  background: linear-gradient(#fafafa, #efefef);
  border-bottom: 1px solid ${LINE};
`;
const Grip = styled.i`
  width: ${(p) => p.$w || 16}px;
  height: ${(p) => p.$h || 26}px;
  flex: none;
  background: radial-gradient(circle, #b4b4b4 0.8px, transparent 1px) center / 3px 3px;
  background-clip: content-box;
  padding: 0 ${(p) => ((p.$w || 16) - 5) / 2}px 0 ${(p) => ((p.$w || 16) - 2) / 2}px;
`;
const ToolButton = styled.button`
  position: relative;
  width: ${(p) => p.$w || 33}px;
  height: ${(p) => p.$h || 31}px;
  flex: none;
  display: flex;
  align-items: center;
  padding: 0 0 0 ${(p) => p.$pad ?? 4}px;
  border: 1px solid ${(p) => (p.$on ? "#a2a2a2" : "transparent")};
  border-radius: 3px;
  background: ${(p) => (p.$on ? "#dcdcdc" : "none")};
`;
const Arrow = styled.i`
  width: 0;
  height: 0;
  flex: none;
  border: solid transparent;
  border-width: ${(p) => p.$s || 4}px ${(p) => p.$s || 4}px 0;
  border-top-color: ${(p) => (p.$off ? "#aaa" : "#555")};
`;
const DropArrow = styled(Arrow)`margin-left: 6px;`;
const CornerArrow = styled(Arrow)`
  position: absolute;
  right: 1px;
  bottom: 1px;
`;
const Sep = styled.i`
  width: 1px;
  height: ${(p) => p.$h || 28}px;
  flex: none;
  margin: 0 ${(p) => p.$m ?? 3}px;
  background: #d2d2d2;
`;

const Tool = ({ n, off, dd, corner, on }) => (
  <ToolButton $w={dd ? dd : 33} $on={on}>
    <Icon name={n} off={off} />
    {dd && <DropArrow $off={off} />}
    {corner && <CornerArrow $off={off} $s={3} />}
  </ToolButton>
);
const SmallTool = ({ n, off, corner, on, dd }) => (
  <ToolButton $w={dd ? 36 : 25} $h={24} $pad={3.5} $on={on}>
    <Icon name={n} size={16} off={off} />
    {dd && <DropArrow />}
    {corner && <CornerArrow $s={3} />}
  </ToolButton>
);

const Main = styled.main`
  flex: none;
  height: 875px;
  display: flex;
`;
const Split = styled.div`
  flex: none;
  width: ${(p) => p.$w || "auto"};
  height: ${(p) => p.$h || "auto"};
  display: flex;
  align-items: center;
  justify-content: center;
  &::after {
    content: "";
    width: ${(p) => (p.$h ? 17 : 1)}px;
    height: ${(p) => (p.$h ? 1 : 17)}px;
    background: repeating-linear-gradient(${(p) => (p.$h ? "to right" : "to bottom")}, #b0b0b0 0 1px, transparent 1px 3px);
  }
`;
const Column = styled.section`
  width: ${(p) => p.$w}px;
  flex: none;
  display: flex;
  flex-direction: column;
  padding-top: ${(p) => p.$t || 0}px;
`;
const DockTitle = styled.div`
  height: 23px;
  flex: none;
  display: flex;
  align-items: center;
  gap: 2px;
  margin-right: ${(p) => p.$mr || 0}px;
  padding: 0 2px 2px ${(p) => p.$l ?? 4}px;
  letter-spacing: ${(p) => p.$ls ?? -0.3}px;
  span { flex: 1; }
`;
const DockButton = styled.svg`width: 12px; height: 12px; display: block; fill: none; stroke: #666;`;
const DockButtons = () => (
  <>
    <DockButton viewBox="0 0 12 12"><rect x=".5" y=".5" width="11" height="11" rx="2" /><rect x="2.5" y="4.5" width="5" height="5" rx="1" /><path d="M5 4V2.500h4.500V7H8" /></DockButton>
    <DockButton viewBox="0 0 12 12"><rect x=".5" y=".5" width="11" height="11" rx="2" /><path d="M3 3l6 6M9 3l-6 6" strokeWidth="2.2" stroke="#444" /></DockButton>
  </>
);
const DockTools = styled.div`
  height: 24px;
  flex: none;
  display: flex;
  align-items: center;
  margin-bottom: 4px;
  padding-left: ${(p) => p.$l ?? 3.5}px;
`;
const Pane = styled.div`
  background: #fff;
  border: 1px solid ${LINE};
  overflow: hidden;
  display: flex;
  flex-direction: ${(p) => (p.$row ? "row" : "column")};
  height: ${(p) => p.$h || "auto"};
  flex: ${(p) => (p.$h ? "none" : 1)};
`;
const TreeList = styled.div`flex: 1; overflow: hidden;`;
const TreeRow = styled.div`
  height: 18px;
  display: flex;
  align-items: center;
  padding-left: ${(p) => p.$l}px;
  background: ${(p) => (p.$sel ? "#f0f0f0" : "none")};
`;
const TreeName = styled.span`padding-top: 1px;`;
const Twist = styled.i`
  width: 8px;
  height: 8px;
  flex: none;
  margin-right: ${(p) => p.$gap ?? 8}px;
  background: #4a4a4a;
  clip-path: ${(p) => (p.$open ? "polygon(0 25%, 100% 25%, 50% 80%)" : "polygon(25% 0, 80% 50%, 25% 100%)")};
`;
const FolderSvg = styled.svg`width: 15px; height: 15px; margin-right: 7px; display: block; flex: none;`;
const Folder = ({ open }) => (
  <FolderSvg viewBox="0 0 15 15">
    {open && <path d="M1 1.500h6l2 1.500h5v2" stroke="#8a8a86" strokeWidth="2.4" fill="none" />}
    <path d={open ? "M1 13.500V5h6l1.500 2H14v6.500z" : "M1 13.500V1.500h6L9 3h5v10.500z"} fill="#efefef" stroke="#8a8a86" />
  </FolderSvg>
);
const Scroll = styled.div`
  width: 14px;
  flex: none;
  display: flex;
  flex-direction: column;
  background: #e4e4e4;
  border-left: 1px solid ${LINE};
`;
const ScrollEnd = styled.div`
  height: 14px;
  display: flex;
  align-items: center;
  justify-content: center;
  background: #fafafa;
  border-bottom: ${(p) => (p.$up ? `1px solid ${LINE}` : 0)};
  border-top: ${(p) => (p.$up ? 0 : `1px solid ${LINE}`)};
  i { transform: ${(p) => (p.$up ? "rotate(180deg)" : "none")}; }
`;
const Thumb = styled.div`
  margin: 14px 0 auto;
  height: 68px;
  background: linear-gradient(to right, #fff, #f4f4f4);
  border: solid ${LINE};
  border-width: 1px 0;
`;
const Check = styled.i`
  width: 13px;
  height: 13px;
  flex: none;
  display: flex;
  background: #fff;
  border: 1px solid #b2b2b2;
  &::after {
    content: "";
    display: ${(p) => (p.$on ? "block" : "none")};
    width: 5px;
    height: 9px;
    margin: 0 0 0 3px;
    border: solid #000;
    border-width: 0 2px 2px 0;
    transform: rotate(38deg) scale(0.9);
  }
`;
const Swatch = styled.i`
  width: 16px;
  height: 16px;
  flex: none;
  background: ${(p) => p.$c};
  border: 1px solid ${(p) => p.$b};
`;
const LayerName = styled.b`
  margin-left: 6px;
  text-decoration: underline;
  letter-spacing: -0.46px;
`;

/* ------------------------------------------------------------ map */

// Boundary vertices are digitised on three local grids and projected to canvas space.
const grid = (x0, y0, kx, ky) => (s) =>
  s.trim().split(/\s+/).map((p) => {
    const [x, y] = p.split(",").map(Number);
    return `${(x0 + x / kx).toFixed(1)},${(y0 + y / ky).toFixed(1)}`;
  }).join(" ");
const west = grid(500, 220, 2.24, 3);
const coast = grid(960, 160, 3, 3);
const north = grid(1080, 140, 3, 3);

const OUTLINE = [
  west("65,508 70,495 82,475 105,448 113,430 116,408 116,395 251,357 271,416 283,395 300,375 318,366 332,363 346,364 346,330 350,312 359,298 348,285 346,265 353,251 366,247 377,252 385,269 394,259 412,256 438,260 443,242 449,232 443,200 491,110 512,106 535,109 558,124 575,150 583,175 585,195 583,217 600,221 622,238 640,268 648,300 646,334 665,336 690,347 712,368 726,400 730,426 805,453 865,440 990,318 998,295 1012,268 1030,249 1050,240"),
  coast("68,408 90,385 100,372 115,358 145,343 150,320 165,288 189,265 195,250 210,233 228,220 245,210 268,203 300,202 318,183 341,149 358,128 380,112 413,101 433,87 460,66 480,57 503,53 515,38"),
  north("167,80 170,65 183,42 191,22 278,62 290,62 301,54 308,68 318,94 306,106 310,125 303,130 306,140 296,157 303,180 306,200 301,223 316,230 318,240 333,247 346,247 352,238 395,218 425,211 465,210 473,225 476,245 484,270 482,325 488,368 484,380 485,440 481,458 484,493 378,505 382,525 370,540 352,548 350,555 323,560 323,583 300,595 295,605 268,603 258,585 252,570 229,541 257,546 262,518 247,506 230,497 222,494 205,510 175,512 161,535 161,583 166,583 170,632 155,645 160,655"),
  west("1418,410 1405,435 1408,458 1421,488 1426,505 1426,535 1413,555 1401,568 1404,575 1424,586 1438,582 1463,578 1468,603 1482,635 1481,643 1450,649 1426,663 1410,647 1396,646 1362,664 1319,691 1322,706 1332,725 1334,770 1345,788 1345,827 1330,855 1310,890 1303,920 1293,923 1260,1000 1241,1035 1239,1065 1235,1070 1235,1120 1238,1160 1234,1205 1212,1235 424,1108 117,618 117,560 98,531 78,520"),
].join(" ");
const BORDERS = [
  coast("68,408 138,472 194,490 268,576 325,592 405,580 430,555 450,552 525,522"),
  coast("228,220 325,302 331,302 335,312 348,313 445,350 459,410 459,443 470,485 489,537"),
  coast("286,203 361,273 392,289 430,284 445,264 415,254 382,252 320,183"),
  coast("341,149 400,218 440,253 460,262 492,265 498,272 516,283 512,296 518,305 530,307 545,302"),
  coast("433,87 527,203 529,240 543,265 545,302"),
  north("185,361 195,358 195,347 210,338 216,346 228,348 232,336 243,336 243,356"),
  north("223,357 240,353 252,357 250,365 238,370 223,357"),
  north("301,223 290,230 262,236 258,250 230,256 227,266 240,290 243,303 258,303 275,292 288,292 291,308 282,320 265,325 266,338 278,338 290,328 299,332 295,345 270,366 248,370 238,370"),
  north("240,370 240,400 236,415 242,425 242,445 232,460 236,480 222,494"),
  north("238,413 270,418 300,406 316,388 318,405 326,430 324,465"),
  north("324,470 316,465 310,467 318,482 313,500 318,525 345,538 354,540 350,548"),
  north("320,470 335,490 340,500 360,497 370,480 370,455 481,455"),
  north("354,540 352,520 368,507 378,507"),
  north("257,546 280,569 323,569"),
  north("280,569 268,603"),
  north("484,325 388,323 365,343 345,355"),
  north("487,369 390,363 383,372"),
  north("328,385 325,370 335,366 345,356"),
  north("346,247 345,238 354,236"),
];
const ENCLAVE = north("328,390 340,386 345,374 345,360 355,365 370,363 383,375 380,390 365,400 345,403 325,398");
const ISLET = north("347,383 352,378 358,384 352,389");

const MapSvg = styled.svg`
  display: block;
  width: 1137px;
  height: 509px;
  fill: #fff9dc;
  stroke: #2b2b2b;
  stroke-width: 1;
  stroke-linejoin: round;
`;
const MapCanvas = () => (
  <MapSvg viewBox="338 139 1137 509">
    <polygon points={OUTLINE} />
    <ellipse cx="914.3" cy="273.3" rx="33.5" ry="30.5" />
    {BORDERS.map((b, i) => <polyline key={i} points={b} fill="none" />)}
    <polygon points={ENCLAVE} fill="#fff" />
    <polygon points={ISLET} />
  </MapSvg>
);

/* ------------------------------------------------------------ attribute table */

const COLS = [["fid", 100], ["full_id", 100], ["name:en", 112], ["boundary", 100], ["osm_id", 100], ["osm_type", 100], ["wikidata", 100], ["type", 100], ["admin_level", 100], ["ISO3166-2", 100]];
const ROWS = [
  ["1", "Abu Dhabi Emirate", "Q187712", "AE-AZ"],
  ["2", "Ajman Emirate", "Q159477", "AE-AJ"],
  ["3", "Dubai", "Q613", "AE-DU"],
  ["4", "Fujairah Emirate", "Q4091", "AE-FU"],
  ["5", "Ras al-Khaimah", "Q170024", "AE-RK"],
  ["6", "Sharjah Emirate", "Q188810", "AE-SH"],
  ["7", "Umm al-Quwain", "Q175021", "AE-UQ"],
].map(([n, name, wiki, iso]) => [n, `r376648${n}`, name, "administrative", `376648${n}`, "relation", wiki, "boundary", "4", iso]);

const GridRow = styled.div`
  display: flex;
  height: ${(p) => (p.$head ? 19 : 30)}px;
  flex: none;
  ${(p) => p.$head && css`background: #f0f0f0;`}
`;
const HeadCell = styled.div`
  width: ${(p) => p.$w}px;
  flex: none;
  text-align: center;
  line-height: 19px;
  background: linear-gradient(#fbfbfb, #ececec);
  border: solid ${LINE};
  border-width: 0 ${(p) => (p.$last ? 0 : 1)}px 1px 0;
  border-right-color: #c6c6c6;
`;
const RowHead = styled.div`
  width: 11px;
  flex: none;
  text-align: center;
  line-height: 30px;
  background: linear-gradient(#fafafa, #f0f0f0);
  border: solid ${LINE};
  border-width: 0 1px 1px 0;
`;
const Cell = styled.div`
  width: ${(p) => p.$w}px;
  flex: none;
  padding: 0 3px;
  line-height: 29px;
  text-align: ${(p) => (p.$right ? "right" : "left")};
  background: ${(p) => (p.$alt ? "#e9e7e3" : "#fff")};
  border: solid #c8c8c8;
  border-width: 0 1px 1px 0;
`;
const Gutter = styled.div`flex: 1; width: 11px; background: #f0f0f0;`;
const TableFoot = styled.div`
  flex: 1;
  display: flex;
  align-items: center;
  justify-content: space-between;
  padding: 0 2px 0 3px;
`;
const FootViews = styled.div`display: flex; align-items: center;`;

/* ------------------------------------------------------------ form controls */

const face = css`
  border: 1px solid #adadad;
  border-radius: 3px;
  background: linear-gradient(#fdfdfd, #eeeeee);
`;
const formText = css`
  font: 11px/14px ${FORM};
  font-variant-ligatures: none;
  letter-spacing: ${(p) => p.$ls ?? -0.14}px;
  color: #000;
`;
const Button = styled.button`
  ${face}
  ${formText}
  position: relative;
  flex: none;
  width: ${(p) => p.$w}px;
  height: ${(p) => p.$h || 24}px;
  display: flex;
  align-items: center;
  justify-content: ${(p) => p.$j || "center"};
  padding: 0 ${(p) => p.$p || 0}px;
  gap: 2px;
  ${(p) => p.$off && css`border-color: #c6c6c6;`}
`;
const ComboBox = styled.div`
  ${face}
  ${formText}
  width: ${(p) => p.$w}px;
  height: ${(p) => p.$h || 24}px;
  flex: none;
  display: flex;
  align-items: center;
  padding: 0 7px 0 ${(p) => p.$p ?? 3}px;
  gap: ${(p) => p.$g ?? 2}px;
  span { flex: 1; padding-top: 1px; }
`;
const Combo = ({ children, lead, ...p }) => (
  <ComboBox {...p}>{lead}<span>{children}</span><Arrow /></ComboBox>
);
const Field = styled.div`
  ${formText}
  width: ${(p) => p.$w}px;
  height: ${(p) => p.$h || 20}px;
  flex: none;
  display: flex;
  align-items: center;
  background: #fff;
  border: 1px solid #adadad;
  border-radius: 3px;
  padding-left: ${(p) => p.$p ?? 3}px;
  gap: ${(p) => p.$g || 0}px;
  color: ${(p) => p.$c || "#000"};
  span { flex: 1; padding-top: 1px; }
`;
const Stepper = styled.div`
  width: ${(p) => p.$w || 14}px;
  align-self: stretch;
  display: flex;
  flex-direction: column;
  align-items: center;
  justify-content: center;
  gap: 3px;
  background: linear-gradient(#fdfdfd, #eee);
  border-left: 1px solid #bbb;
  border-radius: 0 2px 2px 0;
  i:first-child { transform: ${(p) => (p.$one ? "none" : "rotate(180deg)")}; }
`;
const ClearMark = styled.div`margin-right: 11px;`;
const Spin = ({ value, w = 121, h, clear, ls = 0.28 }) => (
  <Field $w={w} $h={h} $ls={ls}>
    <span>{value}</span>
    {clear && <ClearMark><Icon name="clear" size={13} /></ClearMark>}
    <Stepper><Arrow /><Arrow /></Stepper>
  </Field>
);
const Line = styled.i`width: 32px; height: 2px; background: #000;`;
const Patch = styled.i`width: 32px; height: 16px; background: #666;`;
const ColorFill = styled.i`
  width: 208px;
  height: 16px;
  border-radius: 3px;
  background: ${(p) => p.$c};
`;

const StyleBody = styled.div`display: flex; margin-top: 2px; height: 823px;`;
const Tabs = styled.div`
  width: 38px;
  flex: none;
  background: linear-gradient(#f0f0f0 36px, #5d5d5d 36px);
  display: flex;
  flex-direction: column;
  align-items: center;
  padding: 9px 8px 0 0;
  gap: 10px;
  svg:first-child { margin-left: 4px; }
`;
const StyleForm = styled.div`
  flex: 1;
  padding: 4px 0 0 3px;
  display: flex;
  flex-direction: column;
`;
const SymbolArea = styled.div`
  height: 136px;
  margin: 6px 0;
  display: flex;
`;
const PreviewWell = styled.div`
  width: 106px;
  display: flex;
  align-items: center;
  justify-content: flex-end;
  padding: 0 25px 0 0;
`;
const Preview = styled.i`
  width: 61px;
  height: 61px;
  flex: none;
  background: #fff9dc;
  border: 1px solid #232323;
  border-radius: 1px;
`;
const SymbolTree = styled(Pane)`width: 217px; flex: none;`;
const SymbolName = styled.span`
  margin-left: 6px;
  padding-top: 1px;
  font-weight: ${(p) => (p.$b ? 700 : 400)};
`;
const SymbolButtons = styled.div`
  display: grid;
  grid-template-columns: 28px 28px;
  grid-auto-rows: 24px;
  gap: 5px 6px;
  padding: 1px 0 0 6px;
`;
const Rule = styled.i`height: 1px; flex: none; background: #a6a6a6;`;
const TypeRow = styled.div`
  ${formText}
  display: flex;
  align-items: center;
  margin: 9px 0;
  height: 22px;
`;
const TypeLabel = styled.span`width: 87px; letter-spacing: -0.24px;`;
const FormRow = styled.div`
  ${formText}
  height: ${(p) => p.$h || 32}px;
  flex: none;
  display: flex;
  align-items: center;
`;
const FormLabel = styled.label`
  width: 106px;
  padding: 1px 0 0 9px;
  display: flex;
`;
const Widgets = styled.div`
  width: 230px;
  display: flex;
  justify-content: space-between;
  align-items: center;
  margin-right: 9px;
`;
const Stack = styled.div`display: flex; flex-direction: column; gap: 8px;`;
const AxisField = styled.div`
  display: flex;
  align-items: center;
  margin-left: -12px;
`;
const Axis = styled.span`width: 12px; padding-top: 1px;`;
const Spacer = styled.i`flex: ${(p) => (p.$w ? "none" : 1)}; width: ${(p) => p.$w || 0}px;`;
const Footer = styled.div`
  ${formText}
  height: ${(p) => p.$h}px;
  margin-top: ${(p) => p.$mt || 0}px;
  display: flex;
  align-items: center;
  padding-left: ${(p) => p.$l || 0}px;
`;
const Rendering = styled.b`
  font: 700 12px/16px ${UI};
  margin-left: 9px;
  letter-spacing: -0.28px;
`;
const BigTwist = styled.i`
  width: 7px;
  height: 11px;
  background: #333;
  clip-path: polygon(0 0, 100% 50%, 0 100%);
`;
const Text = styled.span`
  width: ${(p) => p.$w}px;
  flex: none;
  padding-left: ${(p) => p.$l || 0}px;
  letter-spacing: ${(p) => p.$ls ?? -0.14}px;
`;
const StatusBar = styled.footer`
  ${formText}
  height: 28px;
  display: flex;
  align-items: center;
  padding: 0 0 1px 4px;
`;

const OverrideIcon = () => <Icon name="override" size={22} />;
const ColorRow = ({ label, color }) => (
  <FormRow>
    <FormLabel>{label}</FormLabel>
    <Widgets>
      <Button $w={217} $h={22}><ColorFill $c={color} /></Button>
      <Button $w={12} $h={22}><Arrow /></Button>
    </Widgets>
    <OverrideIcon />
  </FormRow>
);

const TREE = [
  ["Github", 0], ["Google Drive", 0], ["module 0", 0], ["module 1", 0], ["module 2", 0], ["module 3", 0], ["module 4", 0],
  ["module 5", 0, "links"], ["module 6", 0, "open"], ["DataSet", 1, "open"], ["CSV", 2], ["GeoJSON", 2], ["GeoPackage", 2, "open"],
];
const MENU = [
  ["Pro", "j", "ect", 37], ["", "E", "dit", 20.5], ["", "V", "iew", 25.5], ["", "L", "ayer", 28.5], ["", "S", "ettings", 42], ["", "P", "lugins", 39.5],
  ["Vect", "o", "r", 33], ["", "R", "aster", 32.5], ["", "D", "atabase", 48.5], ["", "W", "eb", 24.5], ["", "M", "esh", 29], ["Pro", "c", "essing", 57.5], ["", "H", "elp", 26],
];

export default function App() {
  return (
    <Window>
      <Global />
      <TitleBar>
        <LoadStrip />
        <Glyph viewBox="0 0 24 24" $s={17}>
          <circle cx="11.5" cy="11.5" r="8.5" fill="none" stroke="#7cae31" strokeWidth="5" />
          <path d="M13 13l9 9" stroke="#589632" strokeWidth="5" />
          <path d="M10 10h5l3 4-3 3-5-4z" fill="#ee7913" />
        </Glyph>
        <Caption>*uae — QGIS [Zaiter]</Caption>
        <WindowButtons>
          <svg viewBox="0 0 46 20" stroke="#111"><path d="M17 10.500h10" /></svg>
          <svg viewBox="0 0 46 20" stroke="#111" fill="none"><path d="M16.500 8.500h6v6h-6zM18.500 8V6.500h6v6H23" /></svg>
          <svg viewBox="0 0 46 20" stroke="#111"><path d="M16 5.500l10 10M26 5.500l-10 10" /></svg>
        </WindowButtons>
      </TitleBar>
      <MenuBar>
        {MENU.map(([a, u, b, w]) => <MenuItem key={u + b} $w={w}>{a}<u>{u}</u>{b}</MenuItem>)}
      </MenuBar>

      <ToolBar>
        <Grip $w={12} />
        {["newFile", "open", "save", "layout", "layoutManager", "styleManager"].map((n) => <Tool key={n} n={n} />)}
        <Grip />
        <Tool n="pan" on />
        {["panSel", "zoomIn", "zoomOut", "zoomFull", "zoomSel", "zoomLayer"].map((n) => <Tool key={n} n={n} />)}
        <Tool n="zoomNative" off /><Tool n="zoomLast" /><Tool n="zoomNext" off />
        {["newMap", "new3d", "bookmark", "bookmarks", "clock", "refresh"].map((n) => <Tool key={n} n={n} />)}
        <Grip />
        <Tool n="select" dd={45.4} /><Tool n="selectVal" dd={45.4} /><Tool n="deselect" dd={45.4} /><Tool n="selectLoc" />
        <Grip $w={15} />
        {["identify", "abacus", "gear", "sigma"].map((n) => <Tool key={n} n={n} />)}
        <Tool n="table" dd={45} /><Tool n="measure" dd={45} /><Tool n="tip" /><Tool n="action" dd={45} off />
      </ToolBar>
      <ToolBar>
        <Grip $w={12} />
        <Tool n="pencils" off corner /><Tool n="pencil" /><Tool n="saveEdit" off /><Tool n="addPoly" off /><Tool n="vertex" off dd={44} />
        {["multi", "trash", "cut", "copy", "paste", "undo", "redo"].map((n) => <Tool key={n} n={n} off />)}
        <Grip />
        <Tool n="tagY" /><Tool n="chart" /><Sep /><Tool n="tagB" /><Tool n="tagR" /><Sep $m={4} />
        {["tagPin", "tagEye", "tagMove", "tagRot", "tagEdit"].map((n) => <Tool key={n} n={n} off />)}
        <Grip />
        <Tool n="globeAdd" /><Tool n="globeFind" /><Tool n="globeBino" />
        <Grip />
        <Tool n="python" /><Tool n="earth" />
        <Grip />
        <Tool n="help" />
        <Grip /><Grip />
        <Tool n="greenLens" /><Tool n="osm" />
        <Grip />
        {["dataSource", "geopackage", "shapefile", "feather", "memory", "mesh"].map((n) => <Tool key={n} n={n} />)}
        <Sep /><Tool n="virtual" /><Sep />
      </ToolBar>
      <ToolBar $h={16}><Grip $w={12} $h={14} /></ToolBar>

      <Main>
        <Column $w={331}>
          <DockTitle><span>Browser</span><DockButtons /></DockTitle>
          <DockTools>
            {["addLayer", "refresh", "funnel", "collapse", "info"].map((n) => <SmallTool key={n} n={n} />)}
          </DockTools>
          <Pane $h="239px" $row>
            <TreeList>
              {TREE.map(([name, depth, state]) => (
                <TreeRow key={name} $l={36 + depth * 16}>
                  <Twist $open={state === "open"} />
                  <Folder open={!!state} />
                  <TreeName>{name}</TreeName>
                </TreeRow>
              ))}
            </TreeList>
            <Scroll>
              <ScrollEnd $up><Arrow /></ScrollEnd>
              <Thumb />
              <ScrollEnd><Arrow /></ScrollEnd>
            </Scroll>
          </Pane>
          <Split $h="5px" />
          <DockTitle><span>Layers</span><DockButtons /></DockTitle>
          <DockTools>
            <SmallTool n="stylePanel" on /><SmallTool n="addGroup" /><SmallTool n="eye" corner /><SmallTool n="funnel" corner />
            <SmallTool n="epsilon" dd /><SmallTool n="expandAll" /><SmallTool n="collapse" /><SmallTool n="removeLayer" />
          </DockTools>
          <Pane>
            <TreeRow $l={24} $sel>
              <Check $on /><Spacer $w={6} />
              <Swatch $c="#b2d2d8" $b="#7393a1" />
              <LayerName>UAE_Boundary [7]</LayerName>
            </TreeRow>
          </Pane>
        </Column>

        <Split $w="6px" />

        <Column $w={1139} $t={1}>
          <Pane $h="511px"><MapCanvas /></Pane>
          <Split $h="5px" />
          <DockTitle $l={7} $ls={-0.42}><span>UAE_Boundary — Features Total: 7, Filtered: 7, Selected: 0</span><DockButtons /></DockTitle>
          <DockTools $l={2}>
            <SmallTool n="pencil" /><SmallTool n="multi" off /><SmallTool n="saveEdit" off /><SmallTool n="refresh" />
            <Sep $h={12} />
            <SmallTool n="tableTag" off corner /><SmallTool n="trash" off /><SmallTool n="cut" off /><SmallTool n="copy" off /><SmallTool n="paste" off />
            <Sep $h={12} />
            {["selExpr", "selAll", "invert", "deselAll", "funnel", "moveTop", "panRows", "zoomSel"].map((n) => <SmallTool key={n} n={n} />)}
            <Sep $h={12} />
            <SmallTool n="newField" off /><SmallTool n="newField" off /><SmallTool n="editField" /><SmallTool n="abacus" />
            <Sep $h={12} />
            <SmallTool n="condFormat" />
            <Sep $h={12} />
            <SmallTool n="dock" on /><SmallTool n="zoomCog" />
          </DockTools>
          <Pane $h="278px">
            <GridRow $head>
              <HeadCell $w={11} $last />
              {COLS.map(([c, w], i) => <HeadCell key={c} $w={w} $last={i === 9}>{c}</HeadCell>)}
            </GridRow>
            {ROWS.map((r, i) => (
              <GridRow key={r[0]}>
                <RowHead>{r[0]}</RowHead>
                {r.map((v, j) => <Cell key={COLS[j][0]} $w={COLS[j][1]} $right={j === 0} $alt={i % 2 === 1}>{v}</Cell>)}
              </GridRow>
            ))}
            <Gutter />
          </Pane>
          <TableFoot>
            <Button $w={120} $h={23} $j="flex-start" $p={3} $ls={-0.1}>
              <Icon name="table" size={15} />Show All Features<CornerArrow $s={3} />
            </Button>
            <FootViews>
              <SmallTool n="formView" /><SmallTool n="table" on />
            </FootViews>
          </TableFoot>
        </Column>

        <Split $w="9px" />

        <Column $w={432}>
          <DockTitle $l={1} $mr={-3}><span>Layer Styling</span><DockButtons /></DockTitle>
          <Combo $w={432} $p={5} lead={<Icon name="polygon" size={16} />}>UAE_Boundary</Combo>
          <StyleBody>
            <Tabs>
              {["palette", "tagTab", "maskTab", "cube", "diagramTab", "history"].map((n) => <Icon key={n} name={n} size={22} />)}
            </Tabs>
            <StyleForm>
              <Combo $w={391} $p={6} lead={<Icon name="single" size={15} />}>Single Symbol</Combo>
              <SymbolArea>
                <PreviewWell><Preview /></PreviewWell>
                <SymbolTree>
                  <TreeRow $l={6}><Twist $open $gap={9} /><Swatch $c="#fff9dc" $b="#8a877b" /><SymbolName $b>Fill</SymbolName></TreeRow>
                  <TreeRow $l={43} $sel><Swatch $c="#b2d2d8" $b="#7393a1" /><SymbolName>Simple Fill</SymbolName></TreeRow>
                </SymbolTree>
                <SymbolButtons>
                  <Button $w={28}><Icon name="plusG" size={14} /></Button>
                  <Button $w={28} $off><Icon name="upG" size={15} off /></Button>
                  <Button $w={28} $off><Icon name="minusG" size={16} off /></Button>
                  <Button $w={28} $off><Icon name="downG" size={15} off /></Button>
                  <Button $w={28}><Icon name="dup" size={15} /></Button>
                  <Button $w={28}><Icon name="unlock" size={14} /></Button>
                </SymbolButtons>
              </SymbolArea>
              <Rule />
              <TypeRow>
                <TypeLabel>Symbol layer type</TypeLabel>
                <Combo $w={294} $h={22}>Simple Fill</Combo>
              </TypeRow>
              <ColorRow label="Fill color" color="#fff9dc" />
              <FormRow>
                <FormLabel>Fill style</FormLabel>
                <Widgets><Combo $w={230} $p={5} lead={<Patch />}>Solid</Combo></Widgets>
                <OverrideIcon />
              </FormRow>
              <ColorRow label="Stroke color" color="#232323" />
              <FormRow>
                <FormLabel>Stroke width</FormLabel>
                <Widgets><Spin value="0.260000" clear /><Combo $w={103} $h={22}>Millimeters</Combo></Widgets>
                <OverrideIcon />
              </FormRow>
              <FormRow>
                <FormLabel>Stroke style</FormLabel>
                <Widgets><Combo $w={230} $p={5} lead={<Line />}>Solid Line</Combo></Widgets>
                <OverrideIcon />
              </FormRow>
              <FormRow>
                <FormLabel>Join style</FormLabel>
                <Widgets><Combo $w={230} $p={5} $g={3} lead={<Icon name="bevel" size={15} />}>Bevel</Combo></Widgets>
                <OverrideIcon />
              </FormRow>
              <FormRow $h={56}>
                <FormLabel>Offset</FormLabel>
                <Widgets>
                  <Stack>
                    <AxisField><Axis>x</Axis><Spin value="0.000000" /></AxisField>
                    <AxisField><Axis>y</Axis><Spin value="0.000000" /></AxisField>
                  </Stack>
                  <Combo $w={103} $h={22}>Millimeters</Combo>
                </Widgets>
                <OverrideIcon />
              </FormRow>
              <Spacer />
              <Footer $h={24} $l={1}>
                <Check $on /><Text $w={116} $l={5} $ls={-0.4}>Enable symbol layer</Text>
                <Icon name="override" size={22} /><Spacer $w={41} />
                <Check /><Text $w={79} $l={5} $ls={-0.2}>Draw effects</Text>
                <Button $w={24} $h={24} $off><Icon name="star" size={15} off /></Button>
              </Footer>
              <Footer $h={20} $mt={22} $l={5}><BigTwist /><Rendering>Layer Rendering</Rendering></Footer>
              <Footer $h={24} $mt={5}>
                <Button $w={24} $h={23}><Icon name="undoO" size={14} /></Button>
                <Spacer $w={6} />
                <Button $w={24} $h={23}><Icon name="redoG" size={14} /></Button>
                <Spacer />
                <Check $on /><Text $w={74} $l={5} $ls={-0.28}>Live update</Text>
                <Button $w={80} $h={21}>Apply</Button>
              </Footer>
            </StyleForm>
          </StyleBody>
        </Column>
      </Main>

      <StatusBar>
        <Field $w={200} $h={22} $p={8} $g={7} $c="#7d7d7d" $ls={0}><Icon name="search" size={13} /><span>Type to locate (Ctrl+K)</span></Field>
        <Spacer $w={931} />
        <Text $w={57} $ls={-0.2}>Coordinate</Text>
        <Field $w={87} $p={6} $h={21} $ls={0.2}><span>55.895,22.521</span></Field>
        <Spacer $w={3} /><Icon name="mouse" size={16} /><Spacer $w={14} />
        <Text $w={28} $ls={-0.3}>Scale</Text>
        <Field $w={80} $p={3} $h={21} $ls={0}><span>1:2217192</span><Stepper $w={20} $one><Arrow /></Stepper></Field>
        <Spacer $w={10} /><Icon name="lock" size={16} /><Spacer $w={7} />
        <Text $w={48} $ls={-0.5}>Magnifier</Text>
        <Spin value="100%" w={83} h={21} ls={0} />
        <Spacer $w={9} />
        <Text $w={51} $ls={-0.2}>Rotation</Text>
        <Spin value="0.0 °" w={83} h={21} ls={0} />
        <Spacer $w={7} />
        <Check $on /><Text $w={55} $l={5}>Render</Text>
        <Icon name="crs" size={16} /><Text $w={76} $l={1} $ls={-0.25}>EPSG:4326</Text>
        <Spacer $w={1} /><Icon name="bubble" size={16} />
      </StatusBar>
    </Window>
  );
}
